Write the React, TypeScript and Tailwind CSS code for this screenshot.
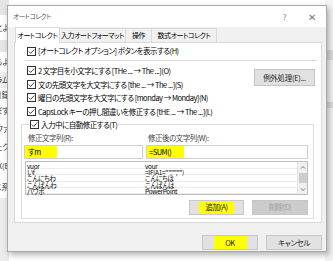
import React from "react";

const FONT = "font-['Noto_Sans_CJK_JP','Noto_Sans',sans-serif] [font-feature-settings:'palt'_1] whitespace-nowrap";

function Check() {
  return (
    <svg width="9" height="9" viewBox="0 0 9 9" className="shrink-0">
      <rect x="0.5" y="0.5" width="8" height="8" fill="white" stroke="#333" />
      <path d="M1.8 4.6 L3.6 6.4 L7.3 2.5" fill="none" stroke="#333" strokeWidth="0.9" />
    </svg>
  );
}

function CheckRow({ label }: { label: string }) {
  return (
    <div className="flex h-[13.5px] items-center gap-[2px] whitespace-nowrap">
      <Check />
      <span>{label}</span>
    </div>
  );
}

const rows: [string, string][] = [
  ["vuor", "vour"],
  ["いf", '=IF(A1="","","")'],
  ["こんにちわ", "こんにちは"],
  ["こんばんわ", "こんばんは"],
  ["パワポ", "PowerPoint"],
];

const docLines: { t: string; h: number; bg?: string }[] = [
  { t: "", h: 15, bg: "bg-[#e4e4e4]" },
  { t: "ことよ", h: 25 },
  { t: "", h: 12, bg: "bg-[#e6e6e6]" },
  { t: "からよ", h: 20 },
  { t: "プラム", h: 16, bg: "bg-[#eeeeee]" },
  { t: "の目録", h: 14 },
  { t: "及ぼす", h: 18 },
  { t: "ファ", h: 18 },
  { t: "ジェク", h: 18 },
  { t: "EX(E", h: 20 },
  { t: "ニ系", h: 22 },
  { t: "", h: 63, bg: "bg-[#ececec]" },
];

export default function App() {
  return (
    <div className={`relative h-[261px] w-[333px] overflow-hidden bg-white text-black ${FONT}`}>
      {/* document behind */}
      <div className="flex h-full w-full">
        <div className="flex w-[9px] flex-col text-[7.5px] text-[#333]">
          {docLines.map((l, i) => (
            <div
              key={i}
              className={`flex shrink-0 items-center justify-end overflow-hidden whitespace-nowrap ${l.bg ?? ""}`}
              style={{ height: l.h }}
            >
              {l.t}
            </div>
          ))}
        </div>
        <div className="flex-1" />
        <div className="flex w-[8px] flex-col bg-[#f3f3f3]">
          <div className="h-[50px]" />
          <div className="h-[10px] bg-[#dcdcdc]" />
          <div className="h-[42px]" />
          <div className="h-[6px] bg-[#dcdcdc]" />
        </div>
      </div>

      {/* dialog */}
      <div className="absolute left-[7px] top-[5px] flex h-[247px] w-[320px] flex-col border border-[#a9a9a9] bg-[#f0f0f0] shadow-[2px_3px_6px_rgba(0,0,0,0.3)]">
        {/* title bar */}
        <div className="flex h-[21px] shrink-0 items-center bg-white pl-[5px] pr-[10px] text-[6.5px] tracking-[-0.3px] text-[#555]">
          <span>オートコレクト</span>
          <span className="ml-auto mr-[22px] text-[8px] text-[#888]">?</span>
          <span className="text-[10px] leading-none text-[#777]">✕</span>
        </div>

        {/* tabs */}
        <div className="relative z-10 ml-[7px] flex h-[15px] shrink-0 items-end text-[7px] tracking-[-0.45px]">
          <div className="-mb-px flex h-[16px] w-[45px] items-center justify-center border border-b-0 border-[#d9d9d9] bg-white">
            オートコレクト
          </div>
          <div className="flex h-[14px] w-[66px] items-center justify-center border-r border-t border-[#d9d9d9]">
            入力オートフォーマット
          </div>
          <div className="flex h-[14px] w-[26px] items-center justify-center border-r border-t border-[#d9d9d9]">
            操作
          </div>
          <div className="flex h-[14px] w-[65px] items-center justify-center border-r border-t border-[#d9d9d9]">
            数式オートコレクト
          </div>
        </div>

        {/* panel */}
        <div className="ml-[6px] flex h-[181px] w-[308px] shrink-0 flex-col border border-[#d9d9d9] bg-white text-[7.5px] tracking-[-0.5px]">
          <div className="ml-[12px] mt-[1px] flex h-[14px] items-center">
            <CheckRow label="[オートコレクト オプション] ボタンを表示する(H)" />
          </div>
          <div className="ml-[10px] mr-[4px] mt-[2px] h-px bg-[#d9d9d9]" />
          <div className="mt-[3px] flex">
            <div className="ml-[12px] flex flex-col">
              <CheckRow label="2 文字目を小文字にする [THe ... → The ...](O)" />
              <CheckRow label="文の先頭文字を大文字にする [the ... → The ...](S)" />
              <CheckRow label="曜日の先頭文字を大文字にする [monday → Monday](N)" />
              <CheckRow label="CapsLock キーの押し間違いを修正する [tHE ... → The ...](L)" />
            </div>
            <div className="ml-auto mr-[6px] mt-[5px] flex h-[17px] w-[61px] items-center justify-center border border-[#c4c4c4] bg-[#e1e1e1] text-[7.5px] tracking-[-0.3px] text-[#222]">
              例外処理(E)...
            </div>
          </div>

          <fieldset className="ml-[6px] mr-[7px] border border-[#dcdcdc] pb-[3px] pl-[2px] pr-[5px]">
            <legend className="ml-[5px] px-px">
              <CheckRow label="入力中に自動修正する(T)" />
            </legend>
            <div className="grid grid-cols-[119px_1fr] gap-x-[3px]">
              <div className="flex h-[12px] items-center pl-[4px] text-[#444]">修正文字列(R):</div>
              <div className="flex h-[12px] items-center pl-[2px] text-[#444]">修正後の文字列(W):</div>
              <div className="mt-[1px] flex h-[14px] items-center border border-[#cfcfcf] bg-white">
                <div className="flex h-full w-[32px] items-center bg-[#ffff00] pl-[3px] text-[7.5px]">すm</div>
              </div>
              <div className="mt-[1px] flex h-[14px] items-center border border-[#cfcfcf] bg-white">
                <div className="flex h-full w-[37px] items-center bg-[#ffff00] pl-[2px] text-[7.5px]">=SUM()</div>
              </div>
            </div>
            <div className="ml-[1px] mt-[2px] flex h-[34px] border border-[#bdbdbd] bg-white">
              <div className="flex flex-1 flex-col pt-px text-[6.5px] leading-[6px] tracking-[-0.3px]">
                {rows.map(([a, b], i) => (
                  <div key={i} className="grid h-[6.4px] grid-cols-[119px_1fr] overflow-visible border-b border-[#ececec] whitespace-nowrap">
                    <span className="pl-px">{a}</span>
                    <span>{b}</span>
                  </div>
                ))}
              </div>
              <div className="flex w-[10px] flex-col items-center border-l border-[#e4e4e4] bg-[#f0f0f0] text-[#555]">
                <svg width="6" height="7" viewBox="0 0 6 7" className="mt-[2px]">
                  <path d="M1 4.5 L3 2.5 L5 4.5" fill="none" stroke="#555" strokeWidth="0.8" />
                </svg>
                <div className="mt-[2px] h-[10px] w-[8px] bg-[#cdcdcd]" />
                <svg width="6" height="7" viewBox="0 0 6 7" className="mt-auto mb-[1px]">
                  <path d="M1 2.5 L3 4.5 L5 2.5" fill="none" stroke="#555" strokeWidth="0.8" />
                </svg>
              </div>
            </div>
            <div className="mt-[5px] flex justify-end gap-[8px]">
              <div className="flex h-[15px] w-[55px] items-center justify-center border border-[#c8c8c8] bg-[#e1e1e1]">
                <span className="flex h-full items-center bg-[#ffff00] px-[6px] text-[7.5px] text-[#222]">追加(A)</span>
              </div>
              <div className="flex h-[15px] w-[56px] items-center justify-center border border-[#c6c6c6] bg-[#cccccc] text-[7.5px] text-[#a2a2a2]">
                削除(D)
              </div>
            </div>
          </fieldset>
        </div>

        {/* bottom buttons */}
        <div className="mr-[4px] mt-[12px] flex justify-end gap-[8px] text-[7.5px] tracking-[-0.4px]">
          <div className="flex h-[15px] w-[56px] items-center justify-center border border-[#c8c8c8] bg-[#e1e1e1]">
            <span className="flex h-full w-[33px] items-center justify-center bg-[#ffff00] text-[#222]">OK</span>
          </div>
          <div className="flex h-[15px] w-[56px] items-center justify-center border border-[#c8c8c8] bg-[#e1e1e1] text-[#222]">
            キャンセル
          </div>
        </div>
      </div>
    </div>
  );
}
